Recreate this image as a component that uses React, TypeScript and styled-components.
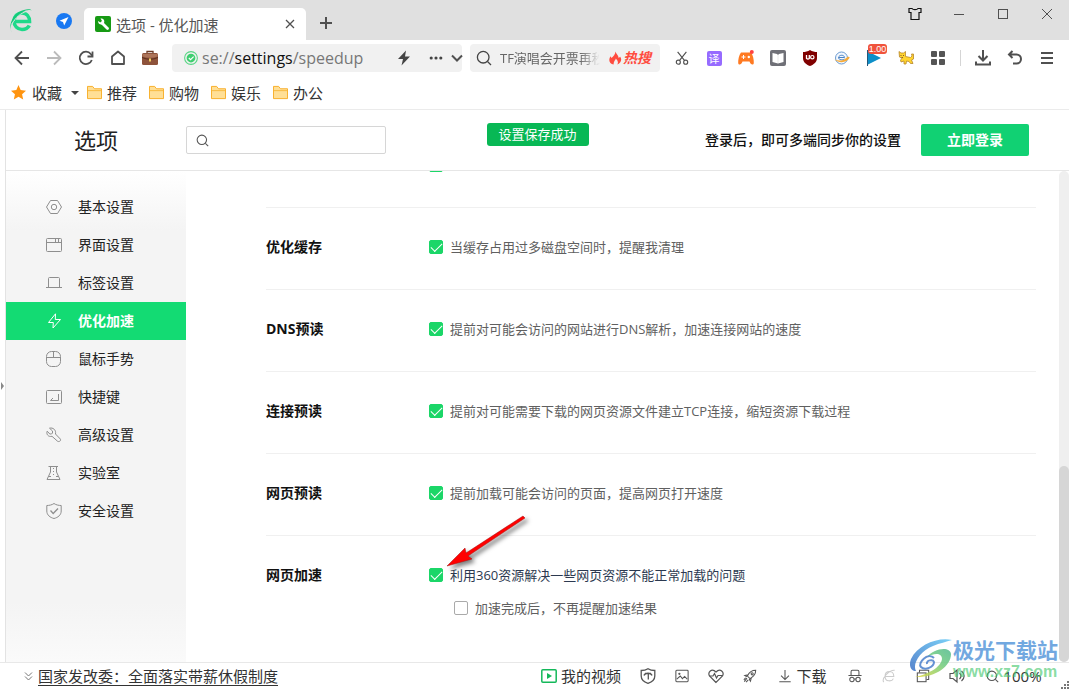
import React, { useState } from "react";
import styled, { createGlobalStyle } from "styled-components";

const GlobalStyle = createGlobalStyle`
  * { box-sizing: border-box; }
  body {
    margin: 0;
    background: #fff;
    color: #222;
    font-family: "Open Sans", "Noto Sans CJK SC", sans-serif;
    font-size: 14px;
    line-height: 20px;
  }
  button, input { font: inherit; color: inherit; }
  button { border: 0; padding: 0; background: none; cursor: pointer; }
  a { color: inherit; text-decoration: none; }
  svg { display: block; flex: none; }
`;

/* ---------- layout ---------- */

const Window = styled.div`
  position: relative;
  display: flex;
  flex-direction: column;
  height: 100vh;
  overflow: hidden;
`;

const TitleBar = styled.header`
  display: flex;
  flex: none;
  height: 40px;
  background: #e0e0e0;
`;

const BrandArea = styled.div`
  display: flex;
  align-items: center;
  justify-content: space-between;
  width: 84px;
  padding: 2px 12px 0 9px;
`;

const Tab = styled.div`
  display: flex;
  align-items: center;
  gap: 5px;
  width: 222px;
  margin-top: 8px;
  padding: 0 8px 0 11px;
  border-radius: 5px 5px 0 0;
  background: #fff;
  color: #555;
  font-size: 15px;
`;

const TabTitle = styled.span`
  flex: 1;
  padding-top: 1px;
`;

const IconButton = styled.button<{ $w?: number; $h?: number }>`
  position: relative;
  display: flex;
  flex: none;
  align-items: center;
  justify-content: center;
  width: ${(p) => p.$w ?? 32}px;
  height: ${(p) => p.$h ?? 32}px;
  color: #505050;
`;

const NewTab = styled(IconButton)`
  margin: 7px 0 0 4px;
`;

const WindowControls = styled.div`
  display: flex;
  margin-left: auto;
`;

const ToolBar = styled.div`
  display: flex;
  flex: none;
  align-items: center;
  height: 36px;
  padding: 0 6px;
`;

const IconGroup = styled.div`
  display: flex;
  flex: none;
  align-items: center;
`;

const AddressBar = styled.div`
  display: flex;
  flex: 1;
  align-items: center;
  gap: 4px;
  height: 28px;
  margin: 0 8px 0 6px;
  padding-left: 12px;
  border-radius: 4px;
  background: #f1f1f1;
  color: #777;
  font-size: 16px;
`;

const AddressText = styled.span`
  flex: 1;
  white-space: nowrap;
  b { color: #111; font-weight: 400; }
`;

const WebSearch = styled.div`
  display: flex;
  align-items: center;
  width: 190px;
  height: 28px;
  margin-right: 6px;
  padding-left: 6px;
  border-radius: 4px;
  background: #f1f1f1;
  color: #444;
`;

const SearchHint = styled.span`
  width: 100px;
  margin-left: 8px;
  overflow: hidden;
  color: #666;
  font-size: 13px;
  white-space: nowrap;
  mask-image: linear-gradient(90deg, #000 80px, transparent 100px);
`;

const HotSearch = styled.a`
  display: flex;
  align-items: center;
  gap: 1px;
  margin-left: 8px;
  color: #ff4c3f;
  font-size: 14px;
  font-style: italic;
  font-weight: 700;
`;

const Divider = styled.span`
  width: 1px;
  height: 16px;
  margin: 0 6px;
  background: #d5d5d5;
`;

const TranslateTile = styled.span`
  display: flex;
  align-items: center;
  justify-content: center;
  width: 15px;
  height: 15px;
  border-radius: 2px;
  background: #966bff;
  color: #fff;
  font-size: 11px;
  line-height: 15px;
`;

const Badge = styled.span`
  position: absolute;
  top: 2px;
  left: 10px;
  width: 19px;
  height: 10px;
  border-radius: 3px;
  background: #f0533c;
  color: #fff;
  font: 9px/10px "Liberation Sans", sans-serif;
`;

const BookmarkBar = styled.nav`
  display: flex;
  flex: none;
  align-items: center;
  gap: 12px;
  height: 34px;
  padding: 0 11px;
  border-bottom: 1px solid #ebebeb;
  color: #333;
  font-size: 15px;
  white-space: nowrap;
`;

const Bookmark = styled.a`
  display: flex;
  align-items: center;
  gap: 5px;
`;

const Favourites = styled.button`
  display: flex;
  align-items: center;
  gap: 6px;
  width: 64px;
`;

const Caret = styled.span`
  flex: none;
  margin-left: 3px;
  border: 4px solid transparent;
  border-top-color: #444;
  border-bottom: 0;
`;

const Page = styled.div`
  position: relative;
  display: flex;
  flex: 1;
  flex-direction: column;
  min-height: 0;
  margin-left: 5px;
  border-left: 1px solid #e3e3e3;
`;

const PageHeader = styled.header`
  display: flex;
  flex: none;
  align-items: center;
  height: 61px;
  padding-right: 40px;
  border-bottom: 1px solid #e6e6e6;
`;

const PageTitle = styled.h1`
  width: 180px;
  margin: 0;
  text-align: center;
  font-size: 22px;
  font-weight: 400;
  line-height: 32px;
`;

const SearchBox = styled.label`
  display: flex;
  align-items: center;
  gap: 6px;
  width: 200px;
  height: 28px;
  padding: 0 9px;
  border: 1px solid #d6d6d6;
  border-radius: 2px;
  color: #555;
  input { flex: 1; min-width: 0; border: 0; outline: 0; background: none; font-size: 13px; }
`;

const Toast = styled.div`
  position: absolute;
  top: 13px;
  left: 50%;
  width: 102px;
  height: 23px;
  margin-left: -51px;
  border-radius: 3px;
  background: #08b855;
  color: #fff;
  font-size: 13px;
  line-height: 23px;
  text-align: center;
`;

const LoginHint = styled.strong`
  margin-left: auto;
  font-weight: 500;
  color: #111;
`;

const LoginButton = styled.button`
  width: 108px;
  height: 32px;
  margin-left: 20px;
  border-radius: 2px;
  background: #11d173;
  color: #fff;
  font-weight: 700;
`;

const Body = styled.div`
  display: flex;
  flex: 1;
  min-height: 0;
`;

const SideNav = styled.nav`
  flex: none;
  width: 180px;
  padding-top: 17px;
  background: linear-gradient(#fff 0, #f4f4f4 60px, #f4f4f4 calc(100% - 60px), #fafafa 100%);
`;

const NavItem = styled.a<{ $active: boolean }>`
  display: flex;
  align-items: center;
  gap: 16px;
  height: 38px;
  padding-left: 40px;
  background: ${(p) => (p.$active ? "#13db73" : "transparent")};
  color: ${(p) => (p.$active ? "#fff" : "#222")};
  font-weight: ${(p) => (p.$active ? 700 : 400)};
  svg { color: ${(p) => (p.$active ? "#fff" : "#8e8e8e")}; }
`;

const Settings = styled.main`
  display: flex;
  flex: 1;
  flex-direction: column;
  justify-content: flex-end;
  min-width: 0;
  overflow: hidden;
  padding: 0 23px 0 80px;
`;

const SettingRow = styled.section`
  display: flex;
  flex: none;
  align-items: flex-start;
  height: 82px;
  padding-top: 29px;
  border-bottom: 1px solid #f0f0f0;
  &:first-child { padding-top: 32px; }
  &:last-child { height: 126px; border-bottom: 0; }
`;

const SettingTitle = styled.h2`
  width: 163px;
  margin: 0;
  color: #111;
  font-size: 14px;
  font-weight: 700;
  line-height: 20px;
`;

const Options = styled.div`
  display: flex;
  flex-direction: column;
  gap: 13px;
`;

const Option = styled.label<{ $nested?: boolean; $strong?: boolean }>`
  display: flex;
  align-items: center;
  gap: 7px;
  min-height: 20px;
  margin-left: ${(p) => (p.$nested ? 25 : 0)}px;
  color: ${(p) => (p.$strong ? "#2c3950" : "#606060")};
  font-size: 13px;
`;

const Check = styled.input`
  appearance: none;
  flex: none;
  width: 14px;
  height: 14px;
  margin: 0;
  border: 1px solid #aaa;
  border-radius: 2px;
  background: #fff;
  &:checked {
    border-color: #1bd668;
    background: #1bd668;
  }
  &:checked::before {
    content: "";
    display: block;
    width: 10px;
    height: 5px;
    margin: 2px 0 0 1px;
    border: solid #fff;
    border-width: 0 0 1px 1px;
    transform: rotate(-45deg);
  }
`;

const ScrollTrack = styled.div`
  display: flex;
  flex: none;
  flex-direction: column;
  justify-content: flex-end;
  width: 10px;
  border-radius: 5px;
  background: #efefef;
`;

const ScrollThumb = styled.div`
  height: 40%;
  border-radius: 5px;
  background: #d6d6d6;
`;

const StatusBar = styled.footer`
  display: flex;
  flex: none;
  align-items: center;
  height: 27px;
  padding-left: 24px;
  border-top: 1px solid #e8e8e8;
  color: #333;
  font-size: 15px;
`;

const NewsLink = styled.a`
  margin-left: 5px;
  margin-right: auto;
  text-decoration: underline;
  text-underline-offset: 3px;
`;

const StatusButton = styled.button<{ $w?: number }>`
  display: flex;
  flex: none;
  align-items: center;
  justify-content: center;
  gap: 4px;
  width: ${(p) => p.$w ?? 34}px;
  height: 26px;
  color: #555;
  span { color: #333; }
`;

const Grip = styled.span`
  align-self: flex-end;
  width: 8px;
  margin-left: 7px;
`;

const SidePull = styled.span`
  position: absolute;
  top: 272px;
  left: -5px;
  border: 4px solid transparent;
  border-left: 3px solid #888;
  border-right: 0;
`;

const PointerArrow = styled.svg`
  position: absolute;
  top: 512px;
  left: 440px;
  pointer-events: none;
`;

const Watermark = styled.div`
  position: absolute;
  right: 11px;
  bottom: 8px;
  display: flex;
  align-items: center;
  pointer-events: none;
`;

const WatermarkText = styled.div`
  width: 105px;
  color: #72a8e0;
  font-size: 21px;
  font-weight: 700;
  line-height: 26px;
  white-space: nowrap;
  small {
    display: block;
    color: rgba(70, 200, 110, 0.65);
    font: 700 16px/18px "Liberation Sans", sans-serif;
  }
`;

/* ---------- icons ---------- */

type IconProps = {
  size?: number;
  w?: number;
  box?: number;
  color?: string;
  children: React.ReactNode;
};

const Icon = ({ size = 16, w = 1, box = 16, color = "currentColor", children }: IconProps) => (
  <svg width={size} height={size} viewBox={`0 0 ${box} ${box}`} fill="none" stroke={color} strokeWidth={w} aria-hidden="true">
    {children}
  </svg>
);

const BrandLogo = () => (
  <svg width="24" height="26" viewBox="0 0 24 26" fill="none" aria-hidden="true">
    <path d="M4.500 13.500H20.500C20.500 8.500 17.500 5 13 5C8.500 5 5 8.500 5 13C5 18 8.500 21.500 13 21.500C16.500 21.500 19 20 20.300 17.500" stroke="#1fd98a" strokeWidth="3.600" />
    <path d="M3.500 25C0 22 1.500 15 6.500 9.500C11.500 4 18 1 22.500 2.500C22 .8 16 .5 10 4C4 8 .5 15 1.500 21C2 23 2.500 24 3.500 25Z" fill="#14c877" />
    <path d="M3 16C6.500 9.500 12 5 18 3.200" stroke="#e0e0e0" strokeWidth="1" />
  </svg>
);

const SearchGlass = ({ size = 16 }: { size?: number }) => (
  <Icon size={size} w={1.3}>
    <circle cx="7.200" cy="7.200" r="5.800" />
    <path d="M11.500 11.500L15 15" />
  </Icon>
);

const Folder = () => (
  <Icon size={15}>
    <path d="M.5 14.500V1.500H6L8 4H15.500V14.500Z" fill="#ffdf96" stroke="#f8ac22" />
    <path d="M1 6H15" stroke="#f6b93c" />
  </Icon>
);

const navIcons: Record<string, React.ReactNode> = {
  basic: <><path d="M4.500 1.500H11.500L15.500 8L11.500 14.500H4.500L.5 8Z" /><circle cx="8" cy="8" r="2.700" /></>,
  ui: <><rect x=".5" y="1.500" width="15" height="13" rx="1" /><path d="M1 5.500H15M9.500 2V5M12.500 2V5" /></>,
  tab: <path d="M0 12.500H16M2.500 12V3.500Q2.500 2.500 3.500 2.500H12.500Q13.500 2.500 13.500 3.500V12" />,
  speed: <path d="M9.500 .8L2.500 9.500H7.300L7 15L14.500 6.500H9.300Z" />,
  mouse: <><rect x=".5" y=".5" width="14" height="15" rx="5" /><path d="M.5 6.500H15M7.500 .5V6.500" /></>,
  keys: <><rect x=".5" y="1.500" width="15" height="13" rx="1" /><path d="M12.500 5V11.500H4.500L7 9" /></>,
  tools: <path d="M3.500 1.200L6.500 4V6L5.500 7H3.800L1.200 4.200C0 7 2.200 10.300 6 9.300L11.500 14.200C13 15.200 15.500 13.800 14.300 12L9.500 7C10.300 3 7 .2 3.500 1.200Z" />,
  lab: <><path d="M2.500 1.500H12M4.500 1.500V7L1 14.500H14L10.500 7V1.500M3 11.500H5M10 11.500H12" /><path d="M7.500 3V12" strokeDasharray="1 2" /></>,
  shield: <><path d="M8 .5C6 2 3 2.500 .8 2.500V8C.8 12 4 14.500 8 15.500C12 14.500 15.200 12 15.200 8V2.500C13 2.500 10 2 8 .5Z" /><path d="M4.500 7.500L7.200 10.500L12 5.500" strokeWidth="1.300" /></>,
};

const navItems: [string, string][] = [
  ["basic", "基本设置"],
  ["ui", "界面设置"],
  ["tab", "标签设置"],
  ["speed", "优化加速"],
  ["mouse", "鼠标手势"],
  ["keys", "快捷键"],
  ["tools", "高级设置"],
  ["lab", "实验室"],
  ["shield", "安全设置"],
];

const settings: [string, string][] = [
  ["优化缓存", "当缓存占用过多磁盘空间时，提醒我清理"],
  ["DNS预读", "提前对可能会访问的网站进行DNS解析，加速连接网站的速度"],
  ["连接预读", "提前对可能需要下载的网页资源文件建立TCP连接，缩短资源下载过程"],
  ["网页预读", "提前加载可能会访问的页面，提高网页打开速度"],
];

const extensions: { name: string; icon: React.ReactNode }[] = [
  { name: "截图", icon: <Icon size={14} w={1.3}><path d="M3 1L11 11M13 1L5 11" /><circle cx="3.800" cy="12.800" r="2.300" /><circle cx="12.200" cy="12.800" r="2.300" /></Icon> },
  { name: "翻译", icon: <TranslateTile>译</TranslateTile> },
  {
    name: "游戏",
    icon: (
      <Icon>
        <path d="M3 2.500H13C15 5 16 10 15.800 13C15.500 15.500 12.500 15 11.500 11.500H4.500C3.500 15 .5 15.500 .2 13C0 10 1 5 3 2.500Z" fill="#ff7a22" stroke="none" />
        <path d="M3.500 7H7.500M5.500 5V9" stroke="#fff" /><circle cx="10.800" cy="7" r="1.200" fill="#fff" stroke="none" />
        <circle cx="13.800" cy="2" r="2" fill="#ff4141" stroke="none" />
      </Icon>
    ),
  },
  {
    name: "阅读",
    icon: (
      <Icon>
        <rect width="16" height="16" rx="2" fill="#6f7077" stroke="none" />
        <path d="M2.500 3L7 4L8 5L9 4L13.500 3V12L8 13.500L2.500 12Z" fill="#fff" stroke="none" /><path d="M8 5V13" stroke="#ddd" strokeWidth=".6" />
      </Icon>
    ),
  },
  {
    name: "广告拦截",
    icon: (
      <Icon>
        <path d="M8 0C6 1.500 3 2 1 2V8C1 12 4 14.500 8 16C12 14.500 15 12 15 8V2C13 2 10 1.500 8 0Z" fill="#800000" stroke="none" />
        <path d="M4.500 5V8.500Q6 9.500 7.300 8.500V5" stroke="#fff" strokeWidth="1.300" /><circle cx="10.300" cy="7.200" r="1.700" stroke="#fff" strokeWidth="1.200" />
      </Icon>
    ),
  },
  {
    name: "兼容模式",
    icon: (
      <Icon>
        <circle cx="7.500" cy="8" r="6" fill="#f2f7fd" stroke="#6b9bd2" /><path d="M4.500 7.500H10.500C10.500 4.500 5 4.500 4.500 7.500C4.500 10 9 10.500 10.500 9" stroke="#4b83c5" />
        <path d="M.5 9.500C5 11.500 10 11 14 6.500L15.800 7.500C13 12.500 6 14 .5 9.500Z" fill="#f7ab38" stroke="none" />
      </Icon>
    ),
  },
  { name: "倍速播放", icon: <><Icon><path d="M1 1L15 8L1 15Z" fill="#0d8fc9" stroke="none" /><path d="M1.500 0V16" stroke="#24577a" /></Icon><Badge>1.00</Badge></> },
  {
    name: "宠物",
    icon: (
      <Icon>
        <path d="M1 1.500L3 3H5.500L7.500 1.500V6.500L12.500 7.500L14 6L13.500 4H15.500V9L13.500 10L15 13.500H12.500L11 11.500L8.500 11L8 14H6V11L3 12L2.500 10L4 8.500L1.500 7Z" fill="#ffd42f" stroke="#b8862c" strokeWidth=".8" />
        <path d="M3 5V6M5.500 5V6M3.500 7.500H5" stroke="#6d4325" strokeWidth=".8" />
      </Icon>
    ),
  },
  {
    name: "应用",
    icon: (
      <Icon>
        <g fill="#555" stroke="none">
          <rect x="1" y="1" width="6" height="6" rx="1" /><rect x="9" y="1" width="6" height="6" rx="1" />
          <rect x="1" y="9" width="6" height="6" rx="1" /><rect x="9" y="9" width="6" height="6" rx="1" />
        </g>
      </Icon>
    ),
  },
];

const statusIcons: { name: string; icon: React.ReactNode }[] = [
  { name: "安全防护", icon: <Icon w={1.3}><path d="M8 .7C6 2 3 2.500 1.200 2.500V8C1.200 11.500 4 14 8 15.300C12 14 14.800 11.500 14.800 8V2.500C13 2.500 10 2 8 .7Z" /><path d="M4 7.500C5 4.500 11 4.500 12 7.500M5 5.500H11M8.300 5V11.500" /></Icon> },
  { name: "图片", icon: <Icon size={14} w={1.2}><rect x="1" y="1.500" width="14" height="13" rx="1" /><path d="M2 11.500L6 8L8.500 11L11 8.500L14 11.500" /><circle cx="5" cy="5.500" r=".7" /></Icon> },
  { name: "健康", icon: <Icon w={1.2}><path d="M8 14.500L1.500 8C-.5 4.500 3.500 -.3 8 4C12.500 -.3 16.500 4.500 14.500 8Z" /><path d="M1.500 8H5L6.500 5.500L8.500 10L10 7.500H14.500" /></Icon> },
  { name: "加速器", icon: <Icon size={14} w={1.2}><path d="M14.500 1.500C10 1.500 7 4 5 8L8 11C12 9 14.500 6 14.500 1.500ZM6 6.500L2 7.500L4.500 9M9.500 10L8.500 14L7 11.500M4.500 10.500L1.500 14.500M3 10L1 12.500M6 12.500L3.500 15" /><circle cx="10.500" cy="5.500" r="1.200" /></Icon> },
];

const toolIcons: { name: string; icon: React.ReactNode }[] = [
  { name: "无痕浏览", icon: <Icon size={14} w={1.2}><path d="M3.500 7V3Q3.500 1.500 5 1.500H11Q12.500 1.500 12.500 3V7M.5 7.500H15.500M7 11.500H9" /><circle cx="4.500" cy="12" r="2.500" /><circle cx="11.500" cy="12" r="2.500" /></Icon> },
  { name: "浏览模式", icon: <Icon size={14} w={1.2} color="#ccc"><path d="M3.500 8.500H13.500C13.500 1 3.500 1 3.500 8.500C3.500 15 11.500 14.500 13 11M2 15C-1 11 8 1 14.500 1.500" /></Icon> },
  { name: "窗口", icon: <Icon size={14} w={1.2}><rect x="1.500" y="4.500" width="10" height="10" /><path d="M4 4V1.500H14.500V12H12" /></Icon> },
  { name: "声音", icon: <Icon w={1.2}><path d="M1 5.500H4L8 2V14L4 10.500H1ZM10.500 5C12.500 7 12.500 9 10.500 11M12.500 3C16 6 16 10 12.500 13" /></Icon> },
];

/* ---------- page ---------- */

export default function App() {
  const [active, setActive] = useState("speed");

  return (
    <>
      <GlobalStyle />
      <Window>
        <TitleBar>
          <BrandArea>
            <BrandLogo />
            <Icon>
              <circle cx="8" cy="8" r="8" fill="#1878f2" stroke="none" />
              <path d="M12.500 4L3.500 7.800L7 9L8.200 12.500Z" fill="#fff" stroke="none" />
            </Icon>
          </BrandArea>
          <Tab>
            <Icon>
              <rect width="16" height="16" rx="2" fill="#179a14" stroke="none" />
              <path d="M7 7L12.500 12.500" stroke="#fff" strokeWidth="2.800" strokeLinecap="round" />
              <path d="M3 5L5.500 6.500L7 5L5.500 2.500C8.500 2 10 4.500 9 7C7.500 9.500 3 9 3 5Z" fill="#fff" stroke="none" />
            </Icon>
            <TabTitle>选项 - 优化加速</TabTitle>
            <IconButton $w={16} $h={16} aria-label="关闭标签">
              <Icon size={10} box={10} w={1.3}><path d="M1 1L9 9M9 1L1 9" /></Icon>
            </IconButton>
          </Tab>
          <NewTab aria-label="新建标签">
            <Icon size={12} box={12} w={2}><path d="M6 0V12M0 6H12" /></Icon>
          </NewTab>
          <WindowControls>
            <IconButton $w={44} $h={28} aria-label="皮肤">
              <Icon size={14} box={14} w={1.2} color="#111"><path d="M1 1.500H4C5 3 9 3 10 1.500H13V5.500H11V12.500H3V5.500H1Z" /></Icon>
            </IconButton>
            <IconButton $w={44} $h={28} aria-label="最小化"><Icon size={10} box={10}><path d="M0 5.500H10" /></Icon></IconButton>
            <IconButton $w={44} $h={28} aria-label="最大化"><Icon size={10} box={10}><rect x=".5" y=".5" width="9" height="9" /></Icon></IconButton>
            <IconButton $w={44} $h={28} aria-label="关闭"><Icon size={10} box={10}><path d="M0 0L10 10M10 0L0 10" /></Icon></IconButton>
          </WindowControls>
        </TitleBar>

        <ToolBar>
          <IconGroup>
            <IconButton aria-label="后退"><Icon w={1.800}><path d="M15 8H2M8 1.500L1.500 8L8 14.500" /></Icon></IconButton>
            <IconButton aria-label="前进"><Icon w={1.800} color="#bbb"><path d="M1 8H14M8 1.500L14.500 8L8 14.500" /></Icon></IconButton>
            <IconButton aria-label="刷新"><Icon w={1.800}><path d="M13.800 10A6.200 6.200 0 1 1 12.800 4L14.500 6" /><path d="M14.500 1.500V6.500H9.500" /></Icon></IconButton>
            <IconButton aria-label="主页"><Icon w={1.800}><path d="M2 14V6.500L8 1.500L14 6.500V14Z" strokeLinejoin="round" /></Icon></IconButton>
            <IconButton aria-label="工具箱">
              <Icon>
                <path d="M5 4V1.500H11V4" stroke="#6b3a26" strokeWidth="1.300" />
                <rect y="3" width="16" height="12" rx="1.500" fill="#8e533b" stroke="none" />
                <path d="M.5 4H15.500V6.500Q8 9 .5 6.500Z" fill="#ad7459" stroke="none" />
                <path d="M0 7.500Q8 11 16 7.500" stroke="#5b2d1c" /><rect x="7" y="8.500" width="2" height="3" fill="#f2d264" stroke="none" />
              </Icon>
            </IconButton>
          </IconGroup>
          <AddressBar>
            <Icon size={14}>
              <circle cx="8" cy="8" r="7.300" stroke="#58d584" strokeWidth="1.200" /><circle cx="8" cy="8" r="5" fill="#3fce70" stroke="none" />
              <path d="M5.500 8L7.500 10L11 6.500" stroke="#fff" strokeWidth="1.300" />
            </Icon>
            <AddressText>se://<b>settings</b>/speedup</AddressText>
            <IconGroup>
              <IconButton $h={28} aria-label="加速"><Icon><path d="M10 .5L2 9H7L5.500 15.500L14 6.500H9Z" fill="#444" stroke="none" /></Icon></IconButton>
              <IconButton $h={28} aria-label="更多"><Icon size={14}><g fill="#444" stroke="none"><circle cx="2.500" cy="8" r="1.800" /><circle cx="8" cy="8" r="1.800" /><circle cx="13.500" cy="8" r="1.800" /></g></Icon></IconButton>
              <IconButton $w={10} $h={28} aria-label="展开"><Icon size={12} box={12} w={2}><path d="M1 3.500L6 8.500L11 3.500" /></Icon></IconButton>
            </IconGroup>
          </AddressBar>
          <WebSearch>
            <SearchGlass />
            <SearchHint>TF演唱会开票再秒空</SearchHint>
            <HotSearch href="#hot">
              <Icon size={14}><path d="M8.500 .5C9 3 12.500 5.500 12 8L14 6.500C16.500 10 14.500 14 10.500 15.500C12.500 12.500 10.500 10.500 9 8.500C8.500 10.500 6 12 6.500 15.500C1.500 14.500 0 10 3 6L4 8C6 6 8.500 4 8.500 .5Z" fill="#ff4c3f" stroke="none" /></Icon>
              热搜
            </HotSearch>
          </WebSearch>
          <IconGroup>
            {extensions.map((e) => (
              <IconButton key={e.name} aria-label={e.name}>{e.icon}</IconButton>
            ))}
            <Divider />
            <IconButton aria-label="下载"><Icon w={2}><path d="M8 0V10M3.500 6L8 10.500L12.500 6M1 11.500V14.500H15V11.500" /></Icon></IconButton>
            <IconButton aria-label="撤销"><Icon w={2}><path d="M5.500 1L2 4.500L5.500 8M2.500 4.500H9.500A4.500 4.500 0 0 1 9.500 13.500H6" /></Icon></IconButton>
            <IconButton aria-label="菜单"><Icon size={12} box={12} w={2}><path d="M0 1H12M0 6H12M0 11H12" /></Icon></IconButton>
          </IconGroup>
        </ToolBar>

        <BookmarkBar>
          <Favourites>
            <Icon size={15}><path d="M8 0L10.300 5.300L16 6L11.800 9.800L13 15.500L8 12.600L3 15.500L4.200 9.800L0 6L5.700 5.300Z" fill="#ff9410" stroke="none" /></Icon>
            收藏
            <Caret />
          </Favourites>
          {["推荐", "购物", "娱乐", "办公"].map((name) => (
            <Bookmark key={name} href="#folder"><Folder />{name}</Bookmark>
          ))}
        </BookmarkBar>

        <Page>
          <PageHeader>
            <PageTitle>选项</PageTitle>
            <SearchBox>
              <SearchGlass size={13} />
              <input type="text" aria-label="搜索设置" />
            </SearchBox>
            <LoginHint>登录后，即可多端同步你的设置</LoginHint>
            <LoginButton>立即登录</LoginButton>
          </PageHeader>
          <Toast role="status">设置保存成功</Toast>
          <SidePull />
          <Body>
            <SideNav>
              {navItems.map(([id, label]) => (
                <NavItem key={id} href={`#${id}`} $active={id === active} onClick={() => setActive(id)}>
                  <Icon>{navIcons[id]}</Icon>
                  {label}
                </NavItem>
              ))}
            </SideNav>
            <Settings>
              <SettingRow>
                <SettingTitle />
                <Check type="checkbox" defaultChecked aria-label="启用" />
              </SettingRow>
              {settings.map(([title, text]) => (
                <SettingRow key={title}>
                  <SettingTitle>{title}</SettingTitle>
                  <Options>
                    <Option><Check type="checkbox" defaultChecked />{text}</Option>
                  </Options>
                </SettingRow>
              ))}
              <SettingRow>
                <SettingTitle>网页加速</SettingTitle>
                <Options>
                  <Option $strong><Check type="checkbox" defaultChecked />利用360资源解决一些网页资源不能正常加载的问题</Option>
                  <Option $nested><Check type="checkbox" />加速完成后，不再提醒加速结果</Option>
                </Options>
              </SettingRow>
            </Settings>
            <ScrollTrack><ScrollThumb /></ScrollTrack>
          </Body>
        </Page>

        <StatusBar>
          <Icon size={9} box={9} color="#777"><path d="M1 .5L4.500 4L8 .5M1 4.500L4.500 8L8 4.500" /></Icon>
          <NewsLink href="#news">国家发改委：全面落实带薪休假制度</NewsLink>
          <StatusButton $w={100}>
            <Icon w={1.5} color="#14b85a"><rect x=".8" y="1.800" width="14.400" height="12.400" rx="1" /><path d="M6 5L11 8L6 11Z" fill="#14b85a" stroke="none" /></Icon>
            <span>我的视频</span>
          </StatusButton>
          {statusIcons.map((s) => <StatusButton key={s.name} aria-label={s.name}>{s.icon}</StatusButton>)}
          <StatusButton $w={71}>
            <Icon size={14} w={1.2}><path d="M8 1V12M3.500 7.500L8 12L12.500 7.500M1.500 14.500H14.500" /></Icon>
            <span>下载</span>
          </StatusButton>
          {toolIcons.map((s) => <StatusButton key={s.name} aria-label={s.name}>{s.icon}</StatusButton>)}
          <StatusButton $w={80}>
            <SearchGlass size={13} />
            <span>100%</span>
          </StatusButton>
          <Grip>
            <svg width="8" height="8" viewBox="0 0 8 8" fill="#777"><path d="M6 0H8V2H6ZM3 3H5V5H3ZM6 3H8V5H6ZM0 6H2V8H0ZM3 6H5V8H3ZM6 6H8V8H6Z" /></svg>
          </Grip>
        </StatusBar>

        <PointerArrow width="95" height="62" viewBox="0 0 95 62" aria-hidden="true">
          <defs>
            <filter id="shadow" x="-20%" y="-20%" width="140%" height="140%" colorInterpolationFilters="sRGB">
              <feDropShadow dx="3" dy="3" stdDeviation="2" floodColor="#000" floodOpacity="0.5" />
            </filter>
          </defs>
          <path d="M7 54L25 36L26 41L83 4L85 6L28 44L32 47Z" fill="#f00" stroke="#a01010" strokeWidth=".5" filter="url(#shadow)" />
        </PointerArrow>

        <Watermark>
          <svg width="44" height="42" viewBox="0 0 44 42" aria-hidden="true">
            <defs>
              <linearGradient id="sky" x1="0" y1="1" x2="1" y2="0"><stop offset="0" stopColor="#3a6fc4" /><stop offset="1" stopColor="#62c7f5" /></linearGradient>
              <linearGradient id="leaf" x1="0" y1="1" x2="1" y2="0"><stop offset="0" stopColor="#e5d93c" /><stop offset=".6" stopColor="#6fcb7c" /><stop offset="1" stopColor="#4fb98e" /></linearGradient>
            </defs>
            <path d="M43 2C28-1 9 7 2 21C-1 29 3 33 7 33C3 26 11 13 24 8C31 5 37 4 43 2Z" fill="url(#sky)" opacity=".85" />
            <path d="M42 16C42 29 25 40 6 39C20 36 32 29 33 21C33 14 24 15 17 20C25 10 41 8 42 16Z" fill="url(#leaf)" opacity=".85" />
            <path d="M25 20C19 14 8 25 12 29C16 33 25 29 25 24C24 21 17 22 18 26" stroke="#4b7fcb" strokeWidth="2" fill="none" opacity=".85" />
          </svg>
          <WatermarkText>极光下载站<small>www.xz7.com</small></WatermarkText>
        </Watermark>
      </Window>
    </>
  );
}
